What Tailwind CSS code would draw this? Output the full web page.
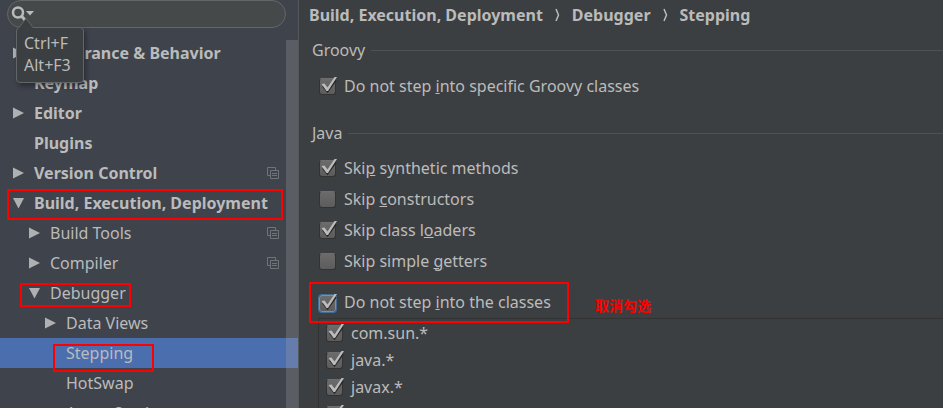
<!DOCTYPE html>
<html lang="en">
<head>
    <meta charset="UTF-8">
    <meta name="viewport" content="width=device-width, initial-scale=1.0">
    <title>Settings</title>
    <script src="https://cdn.jsdelivr.net/npm/@tailwindcss/browser@4"></script>
</head>
<body class="bg-[#3c3f41] text-[#bbbbbb] text-base font-['Noto_Sans','Noto_Sans_CJK_SC',sans-serif]">
    <!-- Shared icons -->
    <svg class="hidden">
        <symbol id="closed" viewBox="0 0 11 12"><path d="M0 0.500L11 6L0 11.500Z" fill="#afb0b1"/></symbol>
        <symbol id="open" viewBox="0 0 11 12"><path d="M0 1H11L5.500 11.500Z" fill="#afb0b1"/></symbol>
        <symbol id="copy" viewBox="0 0 12 12">
            <path d="M3.500 8.500H0.500V0.500H8.500V3.500M3.500 3.500H11.500V11.500H3.500ZM5 6.500H10M5 8.500H10" fill="none" stroke="#6f7479"/>
        </symbol>
        <symbol id="tick" viewBox="0 0 18 18">
            <path d="M4 10L8.500 15.500L17 4" fill="none" stroke="#2b2b2b" stroke-width="2"/>
            <path d="M2.500 8L5.500 7.500L8.500 11.500L15.500 1H18L9 15H7.500Z" fill="#bcbcbc"/>
        </symbol>
    </svg>

    <div class="flex h-screen overflow-hidden">
        <!-- Sidebar -->
        <aside class="relative w-[299px] shrink-0 bg-[#3e434c] border-r border-[#55585a]">
            <!-- Search -->
            <div class="relative pl-[7px] pr-3 mb-[10px]">
                <input type="text" aria-label="Search settings" class="block w-full h-7 rounded-full bg-[#45494a] border border-[#646767] pl-8 outline-none">
                <svg class="absolute left-[11px] top-[5px]" width="24" height="18" viewBox="0 0 24 18">
                    <circle cx="7" cy="7.500" r="5" fill="none" stroke="#bbb" stroke-width="2.500"/>
                    <path d="M10 10.500L14 15" stroke="#bbb" stroke-width="3"/>
                    <path d="M15 6H23L19 10.500Z" fill="#bbb"/>
                </svg>
                <!-- Shortcut hint -->
                <div role="tooltip" class="absolute z-10 left-4 top-[27px] pl-[7px] pr-3 pt-1 pb-[6px] bg-[#3c3f41] border border-[#636669] rounded-sm leading-[22px] shadow-[2px_3px_5px_rgba(0,0,0,0.35)]">
                    <svg class="absolute left-px -top-[10px]" width="16" height="11" viewBox="0 0 16 11">
                        <path d="M0.500 10L8 0.500L15.500 10V11H0.500Z" fill="#3c3f41"/>
                        <path d="M0.500 10L8 0.500L15.500 10" fill="none" stroke="#636669"/>
                    </svg>
                    <p>Ctrl+F</p>
                    <p>Alt+F3</p>
                </div>
            </div>

            <!-- Tree -->
            <nav class="leading-[30px]">
                <a href="#" class="flex items-center gap-[10px] pl-[13px] font-bold"><svg width="11" height="12"><use href="#closed"/></svg>Appearance &amp; Behavior</a>
                <a href="#" class="block pl-[34px] font-bold">Keymap</a>
                <a href="#" class="flex items-center gap-[10px] pl-[13px] font-bold"><svg width="11" height="12"><use href="#closed"/></svg>Editor</a>
                <a href="#" class="block pl-[34px] font-bold">Plugins</a>
                <a href="#" class="flex items-center gap-[10px] pl-[13px] pr-[19px] font-bold"><svg width="11" height="12"><use href="#closed"/></svg>Version Control<svg class="ml-auto" width="12" height="12"><use href="#copy"/></svg></a>
                <a href="#" class="relative flex items-center gap-[10px] pl-[13px] font-bold">
                    <svg width="11" height="12"><use href="#open"/></svg>Build, Execution, Deployment
                    <span class="absolute left-[7px] top-px w-[276px] h-[31px] border-2 border-[#ff0000]"></span>
                </a>
                <a href="#" class="flex items-center gap-[10px] pl-[29px] pr-[19px]"><svg width="11" height="12"><use href="#closed"/></svg>Build Tools<svg class="ml-auto" width="12" height="12"><use href="#copy"/></svg></a>
                <a href="#" class="flex items-center gap-[10px] pl-[29px] pr-[19px]"><svg width="11" height="12"><use href="#closed"/></svg>Compiler<svg class="ml-auto" width="12" height="12"><use href="#copy"/></svg></a>
                <a href="#" class="relative flex items-center gap-[10px] pl-[29px]">
                    <svg width="11" height="12"><use href="#open"/></svg>Debugger
                    <span class="absolute left-5 top-[5px] w-[111px] h-6 border-2 border-[#ff0000]"></span>
                </a>
                <a href="#" class="flex items-center gap-[10px] pl-[45px]"><svg width="11" height="12"><use href="#closed"/></svg>Data Views</a>
                <a href="#" class="relative block pl-[66px] bg-[#4b6eaf]">
                    Stepping
                    <span class="absolute left-[53px] top-[6px] w-[101px] h-7 border-2 border-[#ff0000]"></span>
                </a>
                <a href="#" class="block pl-[66px]">HotSwap</a>
                <a href="#" class="block pl-[66px]">Async Stacktraces</a>
            </nav>

            <!-- Scrollbar -->
            <div class="absolute right-0 top-10 bottom-0 w-3 bg-[#a6a6a6]/28"></div>
        </aside>

        <!-- Stepping settings -->
        <main class="flex-1 min-w-0">
            <h1 class="flex items-center h-[30px] pl-[10px] font-bold whitespace-nowrap">
                Build, Execution, Deployment
                <svg class="mx-3" width="5" height="14" viewBox="0 0 5 14"><path d="M1 1L3.500 7L1 13" fill="none" stroke="#bbb" stroke-width="1.500"/></svg>
                Debugger
                <svg class="mx-3" width="5" height="14" viewBox="0 0 5 14"><path d="M1 1L3.500 7L1 13" fill="none" stroke="#bbb" stroke-width="1.500"/></svg>
                Stepping
            </h1>

            <section class="mt-2">
                <h2 class="flex items-center gap-[6px] pl-[13px] leading-6">Groovy<span class="flex-1 h-px bg-[#515151]"></span></h2>
                <label class="flex items-center gap-2 h-[31px] mt-2 pl-5">
                    <span class="relative w-[17px] h-[17px] mt-0.5">
                        <input type="checkbox" checked class="peer block appearance-none w-full h-full rounded-[3px] bg-linear-to-b from-[#6b6b6b] to-[#5c5c5c] border border-[#333333] border-t-[#6e6e6e]">
                        <svg class="absolute left-0 -top-[2px] hidden peer-checked:block pointer-events-none" width="18" height="18"><use href="#tick"/></svg>
                    </span>
                    <span>Do not step <u>i</u>nto specific Groovy classes</span>
                </label>
            </section>

            <section class="mt-5">
                <h2 class="flex items-center gap-[6px] pl-[13px] leading-6">Java<span class="flex-1 h-px bg-[#515151]"></span></h2>
                <div class="mt-[7px] pl-5">
                    <label class="flex items-center gap-2 h-[31px]">
                        <span class="relative w-[17px] h-[17px] mt-0.5">
                            <input type="checkbox" checked class="peer block appearance-none w-full h-full rounded-[3px] bg-linear-to-b from-[#6b6b6b] to-[#5c5c5c] border border-[#333333] border-t-[#6e6e6e]">
                            <svg class="absolute left-0 -top-[2px] hidden peer-checked:block pointer-events-none" width="18" height="18"><use href="#tick"/></svg>
                        </span>
                        <span>Ski<u>p</u> synthetic methods</span>
                    </label>
                    <label class="flex items-center gap-2 h-[31px]">
                        <span class="relative w-[17px] h-[17px] mt-0.5">
                            <input type="checkbox" class="peer block appearance-none w-full h-full rounded-[3px] bg-linear-to-b from-[#6b6b6b] to-[#5c5c5c] border border-[#333333] border-t-[#6e6e6e]">
                            <svg class="absolute left-0 -top-[2px] hidden peer-checked:block pointer-events-none" width="18" height="18"><use href="#tick"/></svg>
                        </span>
                        <span>Skip <u>c</u>onstructors</span>
                    </label>
                    <label class="flex items-center gap-2 h-[31px]">
                        <span class="relative w-[17px] h-[17px] mt-0.5">
                            <input type="checkbox" checked class="peer block appearance-none w-full h-full rounded-[3px] bg-linear-to-b from-[#6b6b6b] to-[#5c5c5c] border border-[#333333] border-t-[#6e6e6e]">
                            <svg class="absolute left-0 -top-[2px] hidden peer-checked:block pointer-events-none" width="18" height="18"><use href="#tick"/></svg>
                        </span>
                        <span>Skip class l<u>o</u>aders</span>
                    </label>
                    <label class="flex items-center gap-2 h-[31px]">
                        <span class="relative w-[17px] h-[17px] mt-0.5">
                            <input type="checkbox" class="peer block appearance-none w-full h-full rounded-[3px] bg-linear-to-b from-[#6b6b6b] to-[#5c5c5c] border border-[#333333] border-t-[#6e6e6e]">
                            <svg class="absolute left-0 -top-[2px] hidden peer-checked:block pointer-events-none" width="18" height="18"><use href="#tick"/></svg>
                        </span>
                        <span>Skip simple <u>g</u>etters</span>
                    </label>
                </div>

                <!-- Class filters -->
                <div class="relative mt-[10px] pl-5">
                    <label class="flex items-center gap-2 h-8">
                        <span class="relative w-[17px] h-[17px] mt-0.5">
                            <input type="checkbox" checked class="peer block appearance-none w-full h-full rounded-[3px] bg-linear-to-b from-[#6b6b6b] to-[#5c5c5c] border border-[#6295d0] ring-1 ring-[#466d94]">
                            <svg class="absolute left-0 -top-[2px] hidden peer-checked:block pointer-events-none" width="18" height="18"><use href="#tick"/></svg>
                        </span>
                        <span>Do not step <u>i</u>nto the classes</span>
                    </label>
                    <span class="absolute left-[10px] -top-1 w-[260px] h-[41px] border-2 border-[#ff0000]"></span>
                    <strong lang="zh" class="absolute left-[296px] top-[9px] text-[14px] leading-5 text-[#ff0000] font-['Noto_Sans_CJK_SC',sans-serif]">取消勾选</strong>
                </div>
                <div class="ml-[19px] border-t border-l border-[#323232] pl-[7px]">
                    <label class="flex items-center gap-2 h-[27px]">
                        <span class="relative w-[17px] h-[17px] mt-0.5">
                            <input type="checkbox" checked class="peer block appearance-none w-full h-full rounded-[3px] bg-linear-to-b from-[#6b6b6b] to-[#5c5c5c] border border-[#333333] border-t-[#6e6e6e]">
                            <svg class="absolute left-0 -top-[2px] hidden peer-checked:block pointer-events-none" width="18" height="18"><use href="#tick"/></svg>
                        </span>
                        <span>com.sun.*</span>
                    </label>
                    <label class="flex items-center gap-2 h-[27px]">
                        <span class="relative w-[17px] h-[17px] mt-0.5">
                            <input type="checkbox" checked class="peer block appearance-none w-full h-full rounded-[3px] bg-linear-to-b from-[#6b6b6b] to-[#5c5c5c] border border-[#333333] border-t-[#6e6e6e]">
                            <svg class="absolute left-0 -top-[2px] hidden peer-checked:block pointer-events-none" width="18" height="18"><use href="#tick"/></svg>
                        </span>
                        <span>java.*</span>
                    </label>
                    <label class="flex items-center gap-2 h-[27px]">
                        <span class="relative w-[17px] h-[17px] mt-0.5">
                            <input type="checkbox" checked class="peer block appearance-none w-full h-full rounded-[3px] bg-linear-to-b from-[#6b6b6b] to-[#5c5c5c] border border-[#333333] border-t-[#6e6e6e]">
                            <svg class="absolute left-0 -top-[2px] hidden peer-checked:block pointer-events-none" width="18" height="18"><use href="#tick"/></svg>
                        </span>
                        <span>javax.*</span>
                    </label>
                    <label class="flex items-center gap-2 h-[27px]">
                        <span class="relative w-[17px] h-[17px] mt-0.5">
                            <input type="checkbox" checked class="peer block appearance-none w-full h-full rounded-[3px] bg-linear-to-b from-[#6b6b6b] to-[#5c5c5c] border border-[#333333] border-t-[#6e6e6e]">
                            <svg class="absolute left-0 -top-[2px] hidden peer-checked:block pointer-events-none" width="18" height="18"><use href="#tick"/></svg>
                        </span>
                        <span>org.omg.*</span>
                    </label>
                </div>
            </section>
        </main>
    </div>
</body>
</html>
